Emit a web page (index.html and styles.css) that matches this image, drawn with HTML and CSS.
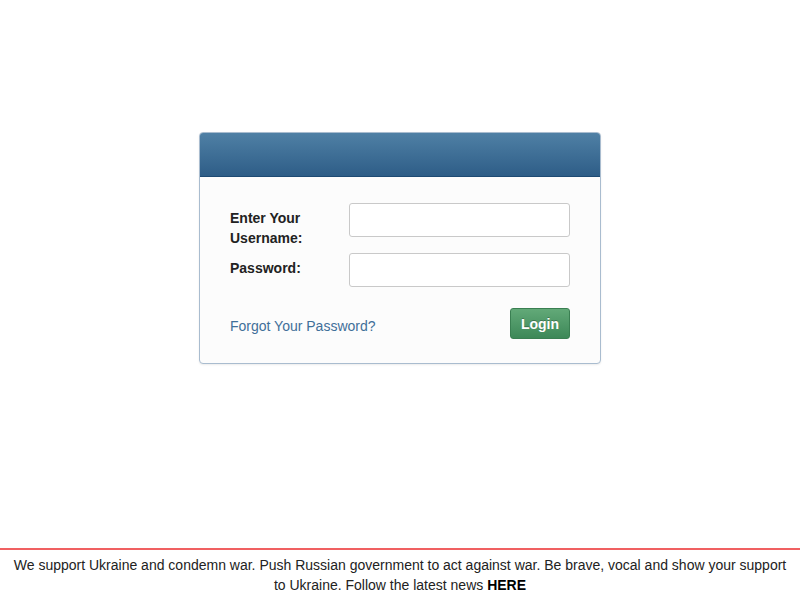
FILE: index.html
```html
<!DOCTYPE html>
<html>
<head>
<meta charset="utf-8">
<link rel="stylesheet" href="styles.css">
</head>
<body>
<div class="page">
  <main class="main">
    <div class="card">
      <div class="card-header"></div>
      <form class="card-body">
        <div class="row">
          <label class="label" for="u">Enter Your Username:</label>
          <input class="input" id="u" type="text">
        </div>
        <div class="row">
          <label class="label" for="p">Password:</label>
          <input class="input" id="p" type="password">
        </div>
        <div class="actions">
          <a class="forgot" href="#">Forgot Your Password?</a>
          <button class="btn" type="button">Login</button>
        </div>
      </form>
    </div>
  </main>
  <footer class="footer">We support Ukraine and condemn war. Push Russian government to act against war. Be brave, vocal and show your support to Ukraine. Follow the latest news <a class="here" href="#">HERE</a></footer>
</div>
</body>
</html>
```
FILE: styles.css
```css
* { box-sizing: border-box; }
html, body { margin: 0; padding: 0; }
body {
  font-family: "Liberation Sans", Arial, sans-serif;
  font-size: 14px;
  line-height: 20px;
  color: #333;
  background: #fff;
}
.page {
  min-height: 100vh;
  display: flex;
  flex-direction: column;
}
.main {
  flex: 1;
  display: flex;
  justify-content: center;
  align-items: flex-start;
  padding-top: 132px;
}
.card {
  width: 402px;
  border: 1px solid #a9bccf;
  border-radius: 4px;
  background: #fcfcfc;
  box-shadow: 0 1px 2px rgba(0,0,0,0.08);
  overflow: hidden;
}
.card-header {
  height: 45px;
  background: linear-gradient(#4f80a5, #2e5d87);
  border-bottom: 1px solid #1e4a73;
  border-top: 1px solid #2b5b85;
  margin-top: -1px;
}
.card-body {
  margin: 0;
  padding: 26px 30px 24px 30px;
}
.row {
  display: flex;
  align-items: flex-start;
  margin-bottom: 5px;
}
.label {
  width: 119px;
  flex: none;
  font-weight: bold;
  color: #222;
  padding-top: 5px;
  padding-right: 30px;
}
.input {
  width: 221px;
  height: 34px;
  border: 1px solid #c9c9c9;
  border-radius: 3px;
  background: #fff;
  font: inherit;
  padding: 4px 8px;
}
.actions {
  display: flex;
  justify-content: space-between;
  align-items: flex-start;
  margin-top: 21px;
}
.forgot {
  color: #3f6f99;
  text-decoration: none;
  font-size: 14px;
  padding-top: 8px;
}
.btn {
  width: 60px;
  height: 31px;
  border: 1px solid #3a7f52;
  border-radius: 3px;
  background: linear-gradient(#62a978, #3d8858);
  color: #fff;
  font-family: inherit;
  font-weight: bold;
  font-size: 14px;
  text-shadow: 0 -1px 0 rgba(0,0,0,0.25);
  padding: 0;
}
.footer {
  border-top: 2px solid #f06061;
  padding: 5px 10px;
  text-align: center;
  color: #222;
}
.here {
  color: #000;
  font-weight: bold;
  text-decoration: none;
}
```
